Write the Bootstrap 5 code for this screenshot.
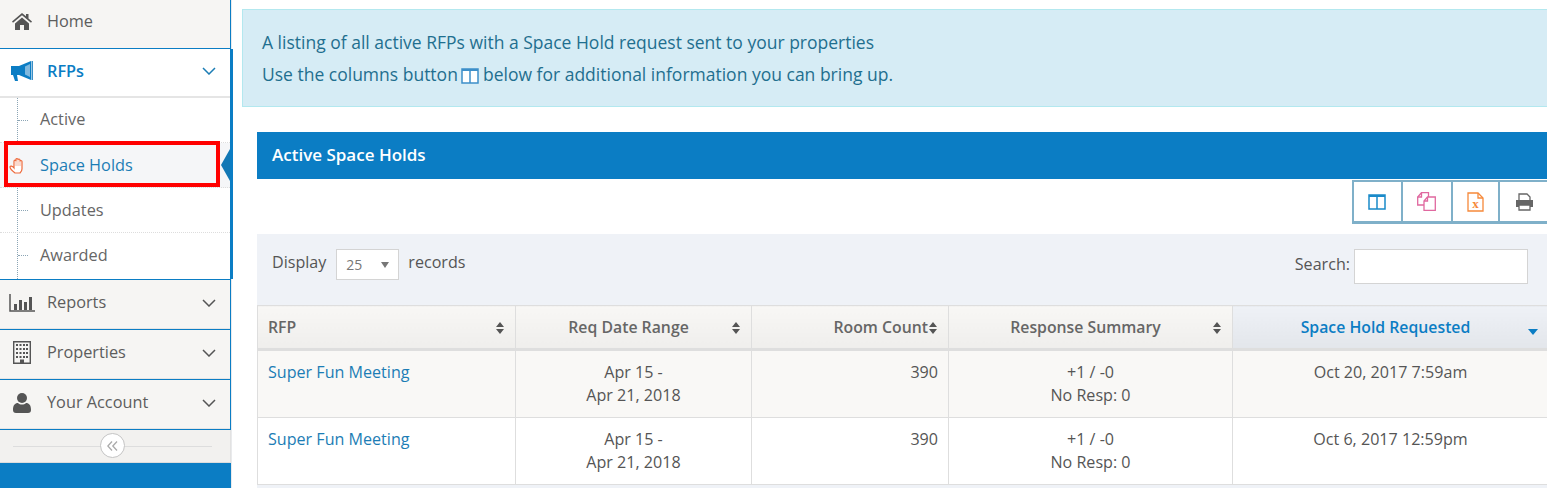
<!DOCTYPE html>
<html lang="en">
<head>
  <meta charset="UTF-8">
  <meta name="viewport" content="width=device-width, initial-scale=1.0">
  <title>Active Space Holds</title>
  <link href="https://cdn.jsdelivr.net/npm/bootstrap@5.3.0/dist/css/bootstrap.min.css" rel="stylesheet">
  <style>
    html, body { height: 488px; overflow: hidden; }
    body { font-family: "Open Sans", sans-serif; font-size: 16.1px; color: #555; background: #fff; }
    .page-wrap { width: 1547px; height: 488px; overflow: hidden; }

    /* sidebar */
    .side-bar { width: 232px; height: 488px; flex: none; position: relative; border-right: 1px solid #e9eaec; font-size: 16.3px; }
    .side-item { width: 231px; height: 50px; background: #f6f5f3; border-bottom: 1px solid #0b7dc4; border-right: 1px solid #0b7dc4; box-shadow: inset 0 -1px 0 #e5e5e5; color: #5d5d5d; padding: 0 14px 4px 0; flex: none; }
    .side-item.first { height: 49px; padding-bottom: 6px; box-shadow: none; }
    .side-item.top-line { height: 51px; border-top: 1px solid #0b7dc4; }
    .side-ico { width: 44px; margin-right: 3px; flex: none; display: flex; justify-content: center; }
    .side-open { border-right: 3px solid #0b7dc4; width: 233px; height: 230px; background: #fff; flex: none; }
    .side-head { height: 49px; border-bottom: 2px solid #e5e5e5; color: #0b7dc4; font-weight: 600; padding: 0 14px 3px 0; }
    .sub-list { position: relative; height: 181px; }
    .sub-list::before { content: ""; position: absolute; left: 17px; top: 0; bottom: 0; border-left: 1px dotted #8ba5b5; }
    .sub-item { height: 45px; padding-left: 40px; color: #666; border-bottom: 1px dotted #ddd; position: relative; }
    .sub-item:first-child { padding-bottom: 2px; }
    .sub-item:last-child { border-bottom: 0; }
    .sub-item::before { content: ""; position: absolute; left: 18px; top: 22px; width: 10px; border-top: 1px dotted #8ba5b5; }
    .sub-item.on { background: #f5f6f8; color: #1c7db5; }
    .sub-item.on::before { display: none; }
    .sub-item.on::after { content: ""; position: absolute; right: 0; top: 6px; border-style: solid; border-color: transparent #1278b5 transparent transparent; border-width: 16px 9px 16px 0; }
    .hand-ico { position: absolute; left: 9px; top: 14px; }
    .mark-box { position: absolute; left: 4px; top: 141px; width: 216px; height: 46px; border: 4px solid #f00; pointer-events: none; }
    .side-foot { width: 231px; height: 33px; background: #f2f1ef; border-bottom: 1px solid #ddd; border-right: 1px solid #e2e2e2; position: relative; flex: none; }
    .side-foot::before { content: ""; position: absolute; left: 13px; right: 18px; top: 16px; border-top: 1px solid #ddd; }
    .fold-btn { position: absolute; left: 100px; top: 3px; width: 25px; height: 25px; border-radius: 50%; border: 1px solid #c4c4c4; background: #fff; }
    .side-blue { flex: 1; width: 231px; background: #0b7dc4; }

    /* main */
    .main-col { width: 1400px; flex: none; padding: 9px 0 0 10px; }
    .info-box { width: 1400px; height: 98px; background: #d6ecf5; border: 1px solid #b3e8ef; color: #1f6f8f; font-size: 17.5px; padding: 16px 19px; line-height: 32px; margin: 0; border-radius: 0; }
    .info-box svg { vertical-align: -3px; margin: 0 -1px; }
    .panel-wrap { margin: 25px 0 0 15px; width: 1291px; }
    .panel-top { height: 47px; background: #0b7dc4; color: #fff; font-size: 17px; font-weight: 600; padding: 0 0 2px 15px; }
    .tool-row { height: 55px; padding: 1px 0 0 1095px; }
    .tool-btn { width: 49px; height: 44px; background: #fff; border: 2px solid #7fb0c9; border-width: 2px 0 3px 2px; }
    .tool-btn:nth-child(2) { width: 50px; }
    .tool-btn:nth-child(3) { width: 48px; }
    .tool-btn:nth-child(4) { width: 50px; }
    .filter-row { height: 71px; background: #eff2f7; padding: 15px 0 0 15px; color: #555; }
    .filter-label { padding-top: 1px; }
    .pick-box { width: 63px; height: 31px; background: #fff; border: 1px solid #d4d4d4; color: #777; font-size: 14px; padding: 0 9px; margin: 0 9px 0 10px; }
    .pick-caret { border: 4px solid transparent; border-top: 6px solid #777; border-bottom: 0; }
    .find-box { margin-left: auto; margin-right: 20px; }
    .find-box span { margin-right: 4px; padding-bottom: 4px; }
    .find-input { width: 174px; height: 35px; border: 1px solid #d4d4d4; background: #fff; }

    .hold-table { table-layout: fixed; width: 1291px; margin: 0; color: #555; border-collapse: collapse; }
    .hold-table th, .hold-table td { border: 1px solid #dedede; padding: 10px; line-height: 23px; font-weight: 400; vertical-align: top; }
    .hold-table th { background: linear-gradient(#f8f7f5, #efeeec); color: #666; font-size: 15.8px; font-weight: 600; border-bottom: 3px solid #dedede; position: relative; padding: 10px 20px 9px 10px; }
    .hold-table th.sorted { background: linear-gradient(#eef1f6, #e3e6eb); color: #0b7dc4; }
    .hold-table tbody tr:first-child td { background: #f9f8f6; }
    .hold-table td { height: 67px; }
    .hold-table a { color: #1c7db5; text-decoration: none; }
    .sort-arrows { position: absolute; right: 10px; top: 15px; }
    .sort-down { position: absolute; right: 10px; top: 23px; }
    .table-foot { height: 10px; background: #eff2f7; }
  </style>
</head>
<body>
<div class="page-wrap d-flex">
  <div class="side-bar d-flex flex-column">
    <div class="side-item first d-flex align-items-center">
      <span class="side-ico">
        <svg width="22" height="18" viewBox="0 0 22 18"><path d="M11 1 1 9.500l1 1.200L11 3.200l9 7.500 1-1.200-3.500-3V2H15v2.200z" fill="#555"/><path d="M4 11.500 11 5.500l7 6V18h-5v-5H9v5H4z" fill="#555"/></svg>
      </span>Home
    </div>
    <div class="side-open">
      <div class="side-head d-flex align-items-center">
        <span class="side-ico">
          <svg width="23" height="20" viewBox="0 0 23 20"><path d="M0 5h8v9H6l1 6H4l-2-6H0z" fill="#0b7dc4"/><path d="M8 5 20 0v19L8 14z" fill="#0b7dc4"/><path d="M14 5.500 19 3v13l-5-2.500z" fill="#7fb8de"/><path d="M20.500 0H22v19h-1.500z" fill="#3a8fc7"/></svg>
        </span>RFPs
        <svg class="ms-auto" width="14" height="8" viewBox="0 0 14 8"><path d="M1 1l6 6 6-6" fill="none" stroke="#1c7db5" stroke-width="1.500"/></svg>
      </div>
      <div class="sub-list">
        <div class="sub-item d-flex align-items-center">Active</div>
        <div class="sub-item on d-flex align-items-center">
          <svg class="hand-ico" width="16" height="18" viewBox="0 0 16 18"><path d="M5 8V4.200a1 1 0 0 1 2 0V2.500a1 1 0 0 1 2 0V3a1 1 0 0 1 2 0v1.500a1 1 0 0 1 2 0V12c0 2-1 3-2 4H6C4 14.500 1 12 1 10c0-1.500 2.500-1 4 1z" fill="#fff" stroke="#ee6a3c" stroke-width="1.200"/><path d="M7 4v5M9 3v6M11 4v5" stroke="#f2a184" stroke-width=".8"/></svg>
          Space Holds
        </div>
        <div class="sub-item d-flex align-items-center">Updates</div>
        <div class="sub-item d-flex align-items-center">Awarded</div>
      </div>
    </div>
    <div class="side-item top-line d-flex align-items-center">
      <span class="side-ico">
        <svg width="26" height="20" viewBox="0 0 26 20"><path d="M1 1v17h25" fill="none" stroke="#555" stroke-width="1.500"/><path d="M5 11h3v6H5zM10 7h3v10h-3zM15 9h3v8h-3zM20 4h3v13h-3z" fill="#555"/></svg>
      </span>Reports
      <svg class="ms-auto" width="14" height="8" viewBox="0 0 14 8"><path d="M1 1l6 6 6-6" fill="none" stroke="#555" stroke-width="1.500"/></svg>
    </div>
    <div class="side-item d-flex align-items-center">
      <span class="side-ico">
        <svg width="18" height="23" viewBox="0 0 18 23"><path d="M.7.7h16.600v21.600H.7z" fill="#f6f5f3" stroke="#555" stroke-width="1.400"/><path d="M3 3h2v2H3zM6.500 3h2v2h-2zM10 3h2v2h-2zM13 3h2v2h-2zM3 7h2v2H3zM6.500 7h2v2h-2zM10 7h2v2h-2zM13 7h2v2h-2zM3 11h2v2H3zM6.500 11h2v2h-2zM10 11h2v2h-2zM13 11h2v2h-2zM3 15h2v2H3zM6.500 15h2v2h-2zM10 15h2v2h-2zM13 15h2v2h-2zM7 18.500h4V22H7z" fill="#555"/></svg>
      </span>Properties
      <svg class="ms-auto" width="14" height="8" viewBox="0 0 14 8"><path d="M1 1l6 6 6-6" fill="none" stroke="#555" stroke-width="1.500"/></svg>
    </div>
    <div class="side-item d-flex align-items-center">
      <span class="side-ico">
        <svg width="18" height="20" viewBox="0 0 18 20"><circle cx="9" cy="5" r="5" fill="#555"/><path d="M0 17c0-5 2-7 5-7 2 2 6 2 8 0 3 0 5 2 5 7 0 2-1 3-3 3H3c-2 0-3-1-3-3z" fill="#555"/></svg>
      </span>Your Account
      <svg class="ms-auto" width="14" height="8" viewBox="0 0 14 8"><path d="M1 1l6 6 6-6" fill="none" stroke="#555" stroke-width="1.500"/></svg>
    </div>
    <div class="side-foot">
      <span class="fold-btn d-flex align-items-center justify-content-center">
        <svg width="11" height="10" viewBox="0 0 11 10"><path d="M5 .5.8 5 5 9.500M10 .5 5.800 5l4.200 4.500" fill="none" stroke="#aaa" stroke-width="1.300"/></svg>
      </span>
    </div>
    <div class="side-blue"></div>
    <div class="mark-box"></div>
  </div>

  <div class="main-col">
    <div class="info-box alert">
      A listing of all active RFPs with a Space Hold request sent to your properties<br>
      Use the columns button
      <svg width="18" height="16" viewBox="0 0 18 16"><path d="M1 1h16v14H1z" fill="#fff" stroke="#3d8fc9" stroke-width="1.500"/><path d="M1 1h16v2H1z" fill="#3d8fc9"/><path d="M9 1v14" stroke="#3d8fc9" stroke-width="1.500"/></svg>
      below for additional information you can bring up.
    </div>

    <div class="panel-wrap">
      <div class="panel-top d-flex align-items-center">Active Space Holds</div>
      <div class="tool-row d-flex">
        <div class="tool-btn d-flex align-items-center justify-content-center">
          <svg width="18" height="16" viewBox="0 0 18 16"><path d="M1 1h16v14H1z" fill="#fff" stroke="#1a8ac9" stroke-width="1.500"/><path d="M1 1h16v2H1z" fill="#1a8ac9"/><path d="M9 1v14" stroke="#1a8ac9" stroke-width="1.500"/></svg>
        </div>
        <div class="tool-btn d-flex align-items-center justify-content-center">
          <svg width="19" height="19" viewBox="0 0 19 19"><path d="M4.500.7h7V13H.7V5z" fill="#fff" stroke="#e0689f" stroke-width="1.300"/><path d="M4.500.7V5H.7" fill="none" stroke="#e0689f" stroke-width="1.300"/><path d="M10.500 5h7.800v13.300H7V9z" fill="#fff" stroke="#e0689f" stroke-width="1.300"/><path d="M10.500 5v4H7" fill="none" stroke="#e0689f" stroke-width="1.300"/></svg>
        </div>
        <div class="tool-btn d-flex align-items-center justify-content-center">
          <svg width="17" height="20" viewBox="0 0 17 20"><path d="M1 1h10l5 5v13H1z" fill="#fff" stroke="#f6893a" stroke-width="1.300"/><path d="M11 1v5h5" fill="none" stroke="#f6893a" stroke-width="1.300"/><text x="8.500" y="16" font-size="13" font-weight="700" font-family="Liberation Serif, serif" text-anchor="middle" fill="#f6893a">x</text></svg>
        </div>
        <div class="tool-btn d-flex align-items-center justify-content-center">
          <svg width="19" height="18" viewBox="0 0 19 18"><path d="M4 7V1h8l3 3v3" fill="#fff" stroke="#666" stroke-width="1.300"/><path d="M1 7h17v7h-3v-2H4v2H1z" fill="#666"/><path d="M4 12h11v5H4z" fill="#fff" stroke="#666" stroke-width="1.300"/></svg>
        </div>
      </div>
      <div class="filter-row d-flex align-items-start">
        <span class="filter-label">Display</span>
        <span class="pick-box d-flex align-items-center justify-content-between">25<i class="pick-caret"></i></span>
        <span class="filter-label">records</span>
        <div class="find-box d-flex align-items-center">
          <span>Search:</span>
          <div class="find-input"></div>
        </div>
      </div>
      <table class="table hold-table">
        <colgroup><col style="width:258px"><col style="width:236px"><col style="width:197px"><col style="width:284px"><col style="width:316px"></colgroup>
        <thead>
          <tr>
            <th>RFP<svg class="sort-arrows" width="10" height="14" viewBox="0 0 10 14"><path d="M5 1l4 5H1zM5 13l4-5H1z" fill="#555"/></svg></th>
            <th class="text-center">Req Date Range<svg class="sort-arrows" width="10" height="14" viewBox="0 0 10 14"><path d="M5 1l4 5H1zM5 13l4-5H1z" fill="#555"/></svg></th>
            <th class="text-end">Room Count<svg class="sort-arrows" width="10" height="14" viewBox="0 0 10 14"><path d="M5 1l4 5H1zM5 13l4-5H1z" fill="#555"/></svg></th>
            <th class="text-center">Response Summary<svg class="sort-arrows" width="10" height="14" viewBox="0 0 10 14"><path d="M5 1l4 5H1zM5 13l4-5H1z" fill="#555"/></svg></th>
            <th class="sorted text-center">Space Hold Requested<svg class="sort-down" width="10" height="6" viewBox="0 0 10 6"><path d="M0 0h10L5 6z" fill="#0b7dc4"/></svg></th>
          </tr>
        </thead>
        <tbody>
          <tr>
            <td><a href="#">Super Fun Meeting</a></td>
            <td class="text-center">Apr 15 -<br>Apr 21, 2018</td>
            <td class="text-end">390</td>
            <td class="text-center">+1 / -0<br>No Resp: 0</td>
            <td class="text-center">Oct 20, 2017 7:59am</td>
          </tr>
          <tr>
            <td><a href="#">Super Fun Meeting</a></td>
            <td class="text-center">Apr 15 -<br>Apr 21, 2018</td>
            <td class="text-end">390</td>
            <td class="text-center">+1 / -0<br>No Resp: 0</td>
            <td class="text-center">Oct 6, 2017 12:59pm</td>
          </tr>
        </tbody>
      </table>
      <div class="table-foot"></div>
    </div>
  </div>
</div>
</body>
</html>
